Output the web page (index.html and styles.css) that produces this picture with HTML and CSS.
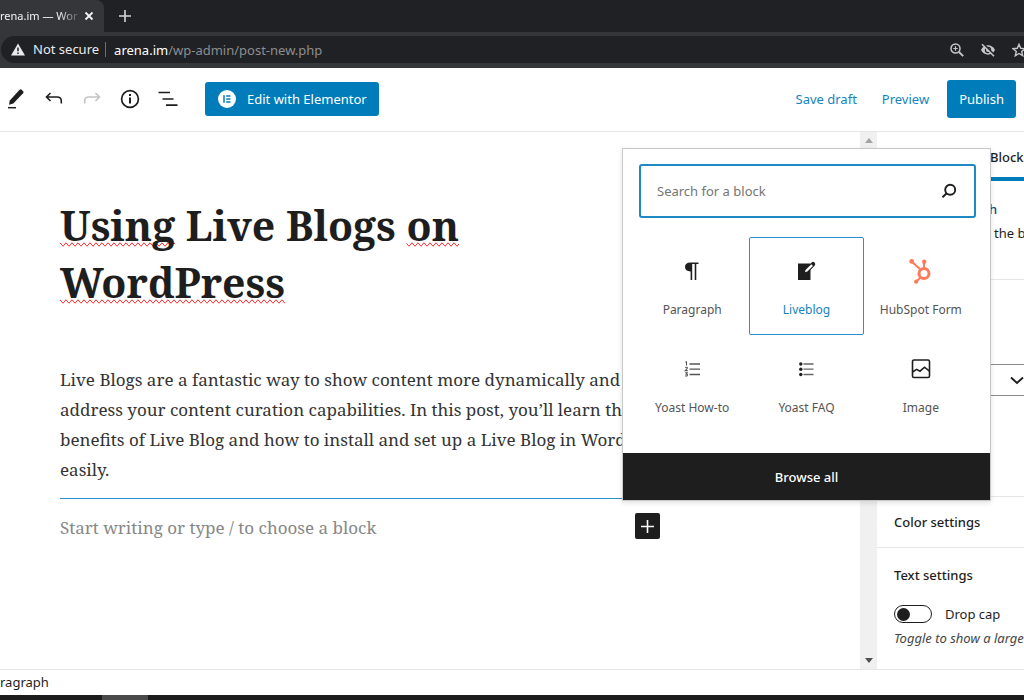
FILE: index.html
```html
<!DOCTYPE html>
<html lang="en">
<head>
<meta charset="utf-8">
<title>Edit post</title>
<link rel="stylesheet" href="styles.css">
</head>
<body>
<div class="screen">
  <div class="tabs">
    <div class="tab">
      <span class="tab-title">rena.im — Wor</span>
      <button class="plain" aria-label="Close tab"><svg width="10" height="10" viewBox="0 0 10 10"><path d="M1.5 1.5l7 7M8.500 1.500l-7 7" stroke="#f1f3f4" stroke-width="1.8" fill="none"/></svg></button>
    </div>
    <button class="plain new-tab" aria-label="New tab"><svg width="12" height="12" viewBox="0 0 12 12"><path d="M6 0v12M0 6h12" stroke="#d5d7da" stroke-width="1.6" fill="none"/></svg></button>
  </div>
  <div class="address-row">
    <div class="address">
      <svg width="14" height="13" viewBox="0 0 14 13"><path d="M7 0.500L14 12.500H0z" fill="#e8eaed"/><path d="M7 4.500v3.800M7 9.500v1.600" stroke="#202124" stroke-width="1.500"/></svg>
      <span class="insecure">Not secure</span>
      <span class="url"><b>arena.im</b>/wp-admin/post-new.php</span>
      <span class="address-icons">
        <svg width="14" height="14" viewBox="0 0 14 14" fill="none" stroke="#c4c7ca"><circle cx="5.500" cy="5.500" r="4.500" stroke-width="1.500"/><path d="M9 9l4.200 4.200" stroke-width="1.900"/><path d="M5.500 3.300v4.400M3.300 5.500h4.400" stroke-width="1.200"/></svg>
        <svg width="16" height="14" viewBox="0 0 16 14"><path d="M1 7C4 .8 12 .8 15 7 12 13.200 4 13.200 1 7z" fill="#c4c7ca"/><circle cx="8" cy="7" r="2.600" fill="#c4c7ca" stroke="#202124" stroke-width="1.200"/><path d="M3.200.6l12 12" stroke="#202124" stroke-width="1.500"/><path d="M2 1.200l12 12" stroke="#c4c7ca" stroke-width="1.600"/></svg>
        <svg width="14" height="14" viewBox="0 0 14 14"><path d="M7 1.300l1.700 4 4.300.4-3.300 2.800 1 4.200L7 10.500l-3.700 2.200 1-4.200L1 5.700l4.300-.4z" fill="none" stroke="#c4c7ca" stroke-width="1.400"/></svg>
      </span>
    </div>
  </div>

  <header class="toolbar">
    <div class="tools">
      <button class="plain" aria-label="Tools"><svg width="18" height="20" viewBox="0 0 18 20"><path d="M2 15.800l.8-4.300L12.600.7q1-.9 2 0l1.500 1.500q.9 1 0 2L6.300 14.600z" fill="#1e1e1e"/><path d="M1 18.700h8" stroke="#1e1e1e" stroke-width="1.500"/></svg></button>
      <button class="plain" aria-label="Undo"><svg width="18" height="14" viewBox="0 0 18 14"><path d="M5.500 1L1.500 5l4 4M1.500 5H12q4.300 0 4.300 4v2.500" fill="none" stroke="#1e1e1e" stroke-width="1.600"/></svg></button>
      <button class="plain" aria-label="Redo"><svg width="18" height="14" viewBox="0 0 18 14"><path d="M12.500 1l4 4-4 4M16.500 5H6Q1.700 5 1.700 9v2.500" fill="none" stroke="#c4c4c4" stroke-width="1.600"/></svg></button>
      <button class="plain" aria-label="Details"><svg width="20" height="20" viewBox="0 0 20 20"><circle cx="10" cy="10" r="8.400" fill="none" stroke="#1e1e1e" stroke-width="1.700"/><path d="M10 8.500v6M10 5v2" stroke="#1e1e1e" stroke-width="2"/></svg></button>
      <button class="plain" aria-label="Outline"><svg width="20" height="16" viewBox="0 0 20 16"><path d="M.5 1.500h11.500M4.500 8h11M8 14.200h11.500" stroke="#1e1e1e" stroke-width="1.700"/></svg></button>
    </div>
    <button class="primary elementor"><svg width="18" height="18" viewBox="0 0 18 18"><circle cx="9" cy="9" r="9" fill="#fff"/><path d="M6 5.300v7.400" stroke="#007cba" stroke-width="1.500"/><path d="M8.200 6h4.300M8.200 9h4.300M8.200 12h4.300" stroke="#007cba" stroke-width="1.400"/></svg>Edit with Elementor</button>
    <div class="actions">
      <button class="plain link">Save draft</button>
      <button class="plain link">Preview</button>
      <button class="primary publish">Publish</button>
    </div>
  </header>

  <div class="workspace">
    <main class="editor">
      <h1><span class="misspelt">Using</span> Live Blogs <span class="misspelt">on</span> <span class="misspelt">WordPress</span></h1>
      <p class="copy">Live Blogs are a fantastic way to show content more dynamically and address your content curation capabilities. In this post, you’ll learn the benefits of Live Blog and how to install and set up a Live Blog in WordPress easily.</p>
      <div class="insertion">
        <p class="placeholder">Start writing or type / to choose a block</p>
        <button class="add" aria-label="Add block"><svg width="13" height="13" viewBox="0 0 13 13"><path d="M6.500 0v13M0 6.500h13" stroke="#fff" stroke-width="1.600"/></svg></button>
      </div>
    </main>
    <div class="scrollbar">
      <svg width="8" height="5" viewBox="0 0 8 5"><path d="M0 5l4-5 4 5z" fill="#a3a3a3"/></svg>
      <svg width="8" height="5" viewBox="0 0 8 5"><path d="M0 0l4 5 4-5z" fill="#505050"/></svg>
    </div>
    <aside class="sidebar">
      <div class="side-tabs"><button class="plain side-tab">Block</button></div>
      <section class="block-card"><strong>h</strong><span>the b</span></section>
      <section class="typography"><button class="size-select" aria-label="Preset size"><svg width="14" height="9" viewBox="0 0 14 9"><path d="M1 1.500l6 5.500 6-5.500" fill="none" stroke="#1e1e1e" stroke-width="1.900"/></svg></button></section>
      <section class="colors"><h2>Color settings</h2></section>
      <section class="text-settings">
        <h2>Text settings</h2>
        <label class="switch"><input type="checkbox">Drop cap</label>
        <p class="hint">Toggle to show a large</p>
      </section>
    </aside>

    <div class="inserter">
      <div class="search">
        <input type="text" placeholder="Search for a block" aria-label="Search for a block">
        <svg width="16" height="16" viewBox="0 0 16 16" fill="none" stroke="#1e1e1e"><circle cx="9.200" cy="6.800" r="5" stroke-width="1.900"/><path d="M5.700 10.300L1.500 14.300" stroke-width="2"/></svg>
      </div>
      <div class="blocks">
        <button class="block"><svg width="24" height="26" viewBox="0 0 24 26"><path d="M18.500 4.500v1.600h-2.200v16h-1.600v-16h-2.500v16h-1.600v-8.600Q5 13 5 9q0-4.500 5.500-4.500z" fill="#1e1e1e"/></svg>Paragraph</button>
        <button class="block selected"><svg width="24" height="26" viewBox="0 0 24 26"><path d="M4 5.500h12.500v16.500H4z" fill="#1e1e1e"/><path d="M12.500 13L19 6.200" stroke="#1e1e1e" stroke-width="4.400" stroke-linecap="round"/><path d="M11 14.200l.5-2.300 5.800-5.600 1.700 1.700-5.700 5.600z" fill="#fff"/></svg>Liveblog</button>
        <button class="block"><svg width="24" height="26" viewBox="0 0 24 26" fill="none" stroke="#ff7a59"><circle cx="15" cy="15.500" r="5" stroke-width="3"/><path d="M2.500 3.500l8.800 7.800M15 4v7M11.500 19.300L7.500 23.500" stroke-width="2"/><g fill="#ff7a59" stroke="none"><circle cx="2.700" cy="3.400" r="2.400"/><circle cx="15.200" cy="3.700" r="2.200"/><circle cx="7.200" cy="23.700" r="2.100"/></g></svg>HubSpot Form</button>
        <button class="block"><svg width="24" height="26" viewBox="0 0 24 26" fill="none" stroke="#555"><path d="M9.500 8H20M9.500 13.200H20M9.500 18.500H20" stroke-width="1.300"/><path d="M6.500 5.500v4M5.500 6.300l1-.8M5.200 11.600q2.700-1 2 .8l-2 2.200h2.500M5.200 16.700h2l-1 1.400q1.900 0 1 1.700-.8.500-2.100 0" stroke-width="1.100"/></svg>Yoast How-to</button>
        <button class="block"><svg width="24" height="26" viewBox="0 0 24 26"><path d="M9.500 8H19.500M9.500 13.200H19.500M9.500 18.500H19.500" stroke="#666" stroke-width="1.300"/><g fill="#1e1e1e"><circle cx="6.800" cy="8" r="1.700"/><circle cx="6.800" cy="13.200" r="1.700"/><circle cx="6.800" cy="18.500" r="1.700"/></g></svg>Yoast FAQ</button>
        <button class="block"><svg width="24" height="26" viewBox="0 0 24 26" fill="none" stroke="#1e1e1e" stroke-width="1.600"><rect x="3.500" y="4" width="17" height="17.500" rx="1.500"/><path d="M3.500 16l4.200-2.600 3.300 1.800 4.500-4 5 4"/></svg>Image</button>
      </div>
      <button class="browse">Browse all</button>
    </div>
  </div>
  <footer class="crumbs">ragraph</footer>
  <div class="taskbar"><span class="running"></span></div>
</div>
</body>
</html>
```
FILE: styles.css
```css
* { box-sizing: border-box; }
body {
  margin: 0;
  font: 13px/20px "Noto Sans", "Open Sans", sans-serif;
  color: #1e1e1e;
  background: #fff;
}
h1, h2, p { margin: 0; }
button, input { font: inherit; color: inherit; }
button { padding: 0; border: 0; cursor: pointer; }
svg { display: block; flex: none; }
.plain { background: none; }
.screen { display: flex; flex-direction: column; height: 100vh; overflow: hidden; }

.tabs { display: flex; align-items: stretch; height: 32px; background: #202124; flex: none; }
.tab {
  display: flex;
  align-items: center;
  justify-content: space-between;
  width: 104px;
  padding-right: 10px;
  background: #35363a;
  border-radius: 0 8px 0 0;
  color: #f1f3f4;
  font-size: 11px;
}
.tab-title {
  white-space: nowrap;
  mask-image: linear-gradient(to right, #000 75%, rgba(0, 0, 0, 0.2));
}
.new-tab { padding: 0 15px; }
.address-row { padding: 4px 0 5px; background: #35363a; flex: none; }
.address {
  display: flex;
  align-items: center;
  height: 27px;
  padding-left: 10px;
  margin-left: 1px;
  background: #202124;
  border-radius: 14px 0 0 14px;
  color: #8b8e92;
  white-space: nowrap;
  overflow: hidden;
}
.insecure { margin-left: 8px; padding-right: 6px; color: #e8eaed; border-right: 1px solid #6b6d70; line-height: 15px; }
.url { margin-left: 8px; }
.url b { font-weight: 400; color: #fff; }
.address-icons { display: flex; gap: 16px; margin-left: auto; margin-right: -2px; }

.toolbar {
  display: flex;
  align-items: center;
  height: 64px;
  padding: 0 8px 1px 4px;
  border-bottom: 1px solid #e6e6e6;
  flex: none;
}
.tools { display: flex; align-items: center; gap: 14px; margin-right: 25px; }
.tools button { display: grid; place-items: center; width: 24px; }
.primary { background: #007cba; color: #fff; border-radius: 3px; }
.elementor { display: flex; align-items: center; gap: 11px; height: 34px; padding: 0 12px 0 13px; }
.actions { display: flex; align-items: center; margin-left: auto; gap: 25px; }
.link { color: #1484bf; }
.publish { height: 38px; padding: 0 12px; margin-left: -7px; }

.workspace { display: flex; flex: 1; min-height: 0; position: relative; }
.editor { flex: 1; min-width: 0; padding: 65px 200px 0 60px; font-family: "Noto Serif", "DejaVu Serif Condensed", "DejaVu Serif", serif; }
h1 { font-size: 41px; line-height: 57px; font-weight: 700; }
.misspelt { text-decoration-line: spelling-error; }
.copy { margin: 54px -16px 0 0; font-size: 17px; line-height: 30px; color: #333; }
.insertion { display: flex; align-items: flex-start; justify-content: space-between; margin-top: 13px; padding-top: 14px; border-top: 1px solid #2b8fc9; }
.placeholder { font-size: 17px; line-height: 30px; color: #878787; }
.add { display: grid; place-items: center; width: 25px; height: 26px; background: #1e1e1e; border-radius: 2px; }

.scrollbar { display: flex; flex-direction: column; align-items: center; justify-content: space-between; width: 17px; padding: 6px 0; background: #f0f0f0; }
.sidebar { width: 147px; overflow: hidden; white-space: nowrap; }
.side-tabs { display: flex; justify-content: flex-end; height: 49px; }
.side-tab { width: 34px; padding-top: 4px; border-bottom: 4px solid #007cba; font-weight: 500; text-align: left; }
.block-card { display: flex; flex-direction: column; gap: 4px; height: 99px; padding: 18px 0 0 112px; border-bottom: 1px solid #e6e6e6; }
.block-card strong { color: #0a4b78; font-weight: 500; }
.block-card span { padding-left: 5px; }
.typography { display: flex; flex-direction: column; height: 217px; padding-top: 84px; border-bottom: 1px solid #e6e6e6; }
.size-select { display: flex; align-items: center; justify-content: flex-end; height: 32px; background: #fff; border: solid #8a8a8a; border-width: 1px 0; }
.sidebar h2 { font-size: 13px; line-height: 20px; font-weight: 500; }
.colors { padding: 15px 17px; border-bottom: 1px solid #e6e6e6; }
.text-settings { padding: 17px 0 0 17px; }
.switch { display: flex; align-items: center; gap: 13px; margin-top: 19px; }
.switch input {
  appearance: none;
  display: flex;
  align-items: center;
  width: 38px;
  height: 18px;
  margin: 0;
  padding-left: 2px;
  border: 1px solid #1e1e1e;
  border-radius: 9px;
}
.switch input::before { content: ""; width: 13px; height: 13px; border-radius: 50%; background: #1e1e1e; }
.hint { margin-top: 4px; font-style: italic; color: #444; }

.inserter {
  position: absolute;
  top: 16px;
  right: 33px;
  width: 369px;
  background: #fff;
  border: 1px solid #c8c8c8;
  box-shadow: 0 2px 5px rgba(0, 0, 0, 0.12);
}
.search { display: flex; align-items: center; height: 54px; margin: 15px 14px 0 16px; padding: 0 17px 0 16px; border: 2px solid #1e8ac4; border-radius: 3px; }
.search input { flex: 1; min-width: 0; padding: 0; border: 0; outline: 0; background: none; }
.search input::placeholder { color: #757575; opacity: 1; }
.blocks { display: grid; grid-template-columns: repeat(3, 1fr); padding: 19px 12px 20px; }
.block {
  display: flex;
  flex-direction: column;
  align-items: center;
  gap: 16px;
  height: 98px;
  padding-top: 20px;
  background: none;
  border: 1px solid transparent;
  border-radius: 2px;
  color: #555;
  font-size: 12px;
  white-space: nowrap;
}
.block.selected { border-color: #2b8fc9; color: #1484bf; }
.browse { display: block; width: 100%; height: 47px; background: #1e1e1e; color: #fff; font-weight: 500; }

.crumbs { height: 26px; padding-top: 2px; border-top: 1px solid #e6e6e6; flex: none; }
.taskbar { display: flex; height: 5px; padding-left: 102px; background: #1c1c1c; flex: none; }
.running { width: 46px; background: #4a4a4a; }
```
